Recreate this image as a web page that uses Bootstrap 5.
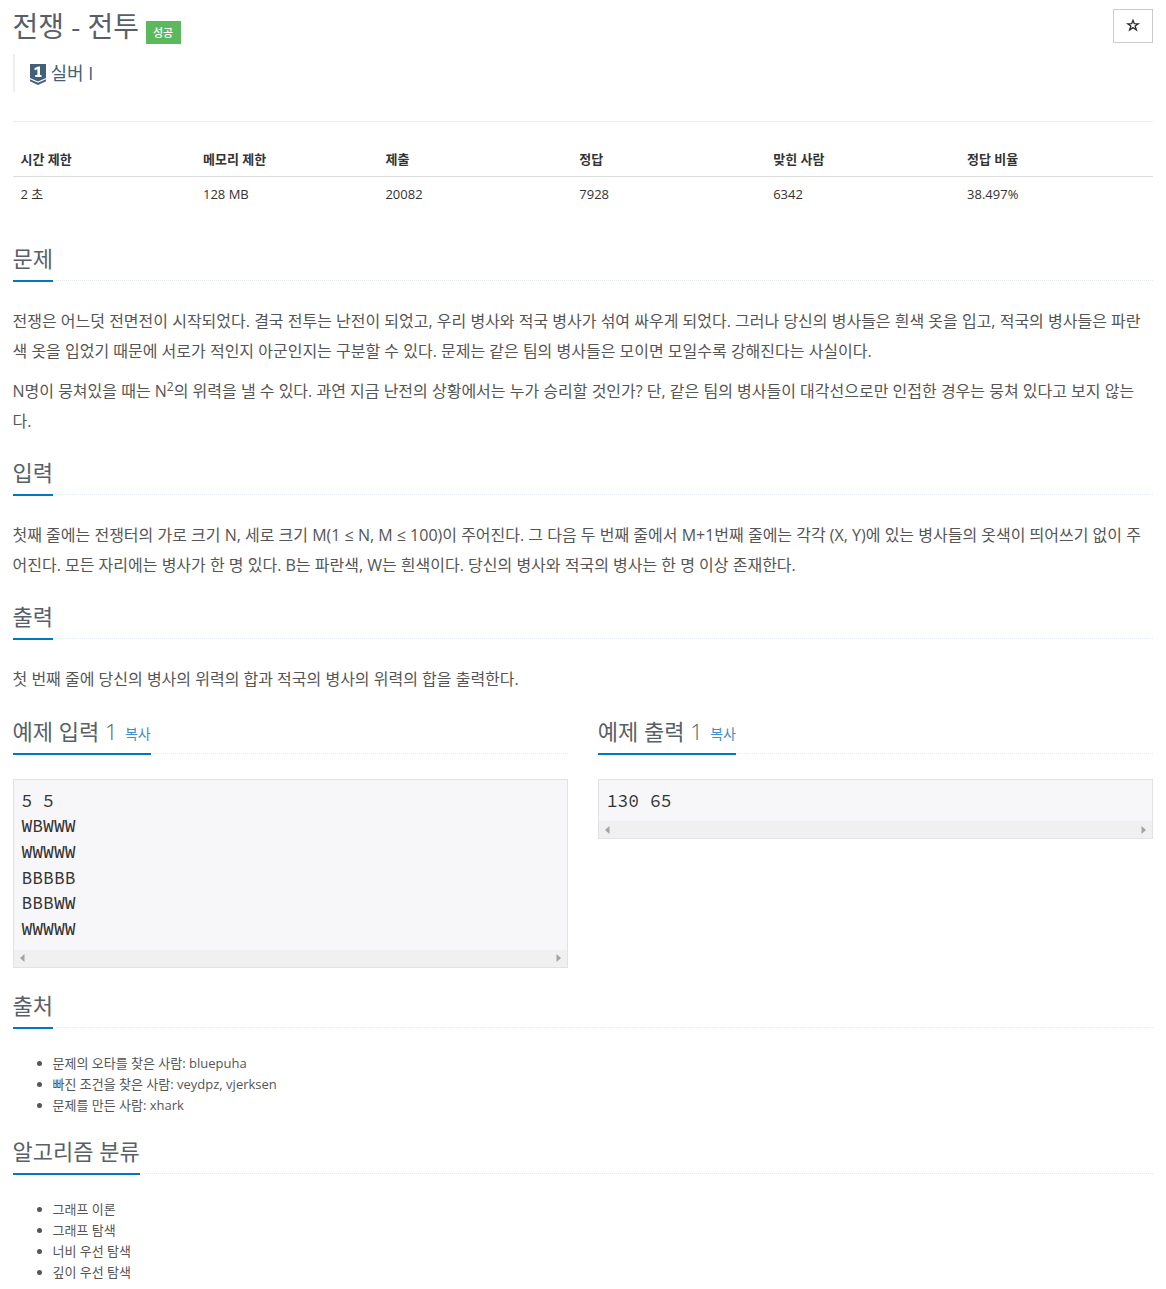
<!DOCTYPE html>
<html lang="ko">
<head>
<meta charset="utf-8">
<meta name="viewport" content="width=device-width, initial-scale=1">
<title>전쟁 - 전투</title>
<link rel="stylesheet" href="https://cdn.jsdelivr.net/npm/bootstrap@5.3.0/dist/css/bootstrap.min.css">
<style>
body{font-family:"Open Sans","Noto Sans CJK KR",sans-serif;font-size:13px;line-height:21px;color:#333;background:#fff}
.page-wrap{padding:0 13px 0 12.5px}
.page-top{height:122px;border-bottom:1px solid #eee}
.problem-title{font-size:28px;font-weight:400;line-height:36px;color:#585f69;margin:8px 0 0;white-space:nowrap}
.tag-success{background:#5cb85c;color:#fff;font-size:11px;font-weight:500;line-height:23px;height:23px;width:35px;text-align:center;margin:21px 0 0 6.5px}
.tier{height:38px;margin-top:10px;border-left:2px solid #eee;padding-left:15px;font-size:18px;color:#435f7a}
.tier svg{margin:2px 5px 0 0}
.btn-star{width:40px;height:34px;margin-top:9px;border:1px solid #ccc;border-radius:0;padding:0;line-height:1}
.btn-star svg{display:block;margin:-2px auto 0 10.5px}
.info-table{margin:20px 0 30px;table-layout:fixed;font-size:13px;--bs-table-color:#333;color:#333}
.info-table th,.info-table td{padding:7px 8px;line-height:20px;border:0}
.info-table th{border-bottom:1px solid #ddd;font-weight:700}
.info-table td{height:35px}
.headline{height:39px;border-bottom:1px dotted #e4e9f0;margin-bottom:25px}
.headline h2{height:40px;margin:0;font-size:22px;font-weight:400;line-height:32px;border-bottom:2px solid #0078bd;color:#585f69;white-space:nowrap}
.headline h2 span{font-weight:300}
.headline a{position:relative;top:-1px;font-size:14px;color:#428bca;text-decoration:none;margin-left:7.5px}
.problem-text{font-size:16px;line-height:30px;color:#555;margin-bottom:20px}
.problem-text p{margin:0 0 10px;white-space:nowrap}
.problem-text p:last-child{margin:0}
.problem-text sup{font-size:12px;top:-.5em}
.sample-row{--bs-gutter-x:30px;padding-top:1px;margin-bottom:21.5px}
.sample-box{background:#f7f7f9;border:1px solid #e1e1e8}
.sample-box pre{font-family:"Source Code Pro","Liberation Mono",monospace;font-size:18px;line-height:25.7px;color:#333;margin:0;padding:8px;overflow:hidden}
.scroll-track{height:17px;background:#f0f0f0;padding:0 6px}
.plain-list{margin:0 0 19px;padding-left:40px;color:#555;line-height:21px}
</style>
<script src="https://cdn.jsdelivr.net/npm/bootstrap@5.3.0/dist/js/bootstrap.bundle.min.js"></script>
</head>
<body>
<main class="page-wrap">
  <header class="page-top">
    <div class="d-flex justify-content-between align-items-start">
      <div>
        <div class="d-flex align-items-start"><h1 class="problem-title">전쟁 - 전투</h1><span class="tag-success">성공</span></div>
        <div class="tier d-flex align-items-center">
          <svg width="16" height="21" viewBox="0 0 16 21" aria-hidden="true"><path fill="#435f7a" d="M0 0h16v14l-8 3.5L0 14zM0 15.3l8 3.4 8-3.4v1.9L8 21l-8-3.8z"/><path fill="#fff" d="M4.6 4.1 8.3 2.5H10V11h1.5v2H5.2v-2h2.2V5.3l-2.8.9z"/></svg>
          <span>실버 I</span>
        </div>
      </div>
      <button class="btn btn-star" type="button" aria-label="즐겨찾기"><svg width="16" height="15" viewBox="0 0 15 14"><path fill="#2b2b2b" fill-rule="evenodd" d="M7.5.4l1.7 4.5h5l-4 2.9 1.6 4.9-4.3-3-4.3 3 1.6-4.9-4-2.9h5zM7.5 3.7l-.8 2.2H4.4l1.8 1.4-.7 2.2 2-1.4 2 1.4-.7-2.2 1.8-1.4H8.3z"/></svg></button>
    </div>
  </header>

  <table class="table info-table">
    <colgroup><col style="width:16%"><col style="width:16%"><col style="width:17%"><col style="width:17%"><col style="width:17%"><col style="width:17%"></colgroup>
    <thead><tr><th>시간 제한</th><th>메모리 제한</th><th>제출</th><th>정답</th><th>맞힌 사람</th><th>정답 비율</th></tr></thead>
    <tbody><tr><td>2 초</td><td>128 MB</td><td>20082</td><td>7928</td><td>6342</td><td>38.497%</td></tr></tbody>
  </table>

  <section>
    <div class="headline d-flex"><h2>문제</h2></div>
    <div class="problem-text">
      <p>전쟁은 어느덧 전면전이 시작되었다. 결국 전투는 난전이 되었고, 우리 병사와 적국 병사가 섞여 싸우게 되었다. 그러나 당신의 병사들은 흰색 옷을 입고, 적국의 병사들은 파란<br>색 옷을 입었기 때문에 서로가 적인지 아군인지는 구분할 수 있다. 문제는 같은 팀의 병사들은 모이면 모일수록 강해진다는 사실이다.</p>
      <p>N명이 뭉쳐있을 때는 N<sup>2</sup>의 위력을 낼 수 있다. 과연 지금 난전의 상황에서는 누가 승리할 것인가? 단, 같은 팀의 병사들이 대각선으로만 인접한 경우는 뭉쳐 있다고 보지 않는<br>다.</p>
    </div>
  </section>
  <section>
    <div class="headline d-flex"><h2>입력</h2></div>
    <div class="problem-text">
      <p>첫째 줄에는 전쟁터의 가로 크기 N, 세로 크기 M(1 ≤ N, M ≤ 100)이 주어진다. 그 다음 두 번째 줄에서 M+1번째 줄에는 각각 (X, Y)에 있는 병사들의 옷색이 띄어쓰기 없이 주<br>어진다. 모든 자리에는 병사가 한 명 있다. B는 파란색, W는 흰색이다. 당신의 병사와 적국의 병사는 한 명 이상 존재한다.</p>
    </div>
  </section>
  <section>
    <div class="headline d-flex"><h2>출력</h2></div>
    <div class="problem-text">
      <p>첫 번째 줄에 당신의 병사의 위력의 합과 적국의 병사의 위력의 합을 출력한다.</p>
    </div>
  </section>

  <div class="row sample-row">
    <section class="col-6">
      <div class="headline d-flex"><h2>예제 입력 <span>1</span><a href="#">복사</a></h2></div>
      <div class="sample-box">
<pre>5 5
WBWWW
WWWWW
BBBBB
BBBWW
WWWWW</pre>
        <div class="scroll-track d-flex justify-content-between align-items-center"><svg width="5" height="8" viewBox="0 0 5 8"><path fill="#a3a3a3" d="M4.5 0v8L0 4z"/></svg><svg width="5" height="8" viewBox="0 0 5 8"><path fill="#a3a3a3" d="M.5 0v8L5 4z"/></svg></div>
      </div>
    </section>
    <section class="col-6">
      <div class="headline d-flex"><h2>예제 출력 <span>1</span><a href="#">복사</a></h2></div>
      <div class="sample-box">
<pre>130 65</pre>
        <div class="scroll-track d-flex justify-content-between align-items-center"><svg width="5" height="8" viewBox="0 0 5 8"><path fill="#a3a3a3" d="M4.5 0v8L0 4z"/></svg><svg width="5" height="8" viewBox="0 0 5 8"><path fill="#a3a3a3" d="M.5 0v8L5 4z"/></svg></div>
      </div>
    </section>
  </div>

  <section>
    <div class="headline d-flex"><h2>출처</h2></div>
    <ul class="plain-list"><li>문제의 오타를 찾은 사람: bluepuha</li><li>빠진 조건을 찾은 사람: veydpz, vjerksen</li><li>문제를 만든 사람: xhark</li></ul>
  </section>
  <section>
    <div class="headline d-flex"><h2>알고리즘 분류</h2></div>
    <ul class="plain-list mb-0"><li>그래프 이론</li><li>그래프 탐색</li><li>너비 우선 탐색</li><li>깊이 우선 탐색</li></ul>
  </section>
</main>
</body>
</html>
